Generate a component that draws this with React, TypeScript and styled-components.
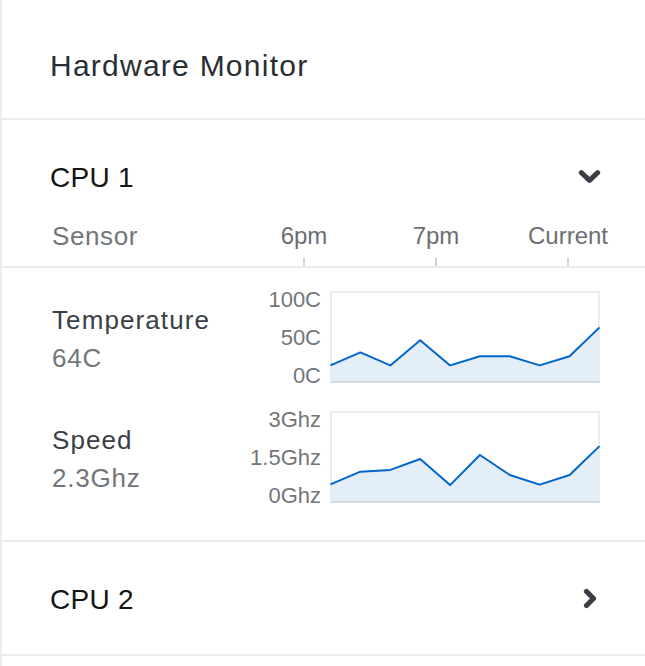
import React from "react";
import styled, { createGlobalStyle } from "styled-components";

const GlobalStyle = createGlobalStyle`
  html, body { margin: 0; padding: 0; background: #ffffff; }
  body { font-family: "Liberation Sans", Arial, sans-serif; }
  * { box-sizing: border-box; }
`;

const Panel = styled.div`
  border-left: 2px solid #ececec;
  min-height: 666px;
`;

const PanelHeader = styled.header`
  height: 120px;
  padding: 48px 0 0 48px;
  border-bottom: 2px solid #ececec;
`;

const PanelTitle = styled.h1`
  margin: 0;
  font-size: 30px;
  line-height: 36px;
  font-weight: 400;
  letter-spacing: 1.25px;
  color: #292e34;
`;

const Item = styled.section`
  border-bottom: 2px solid #ececec;
`;

const Toggle = styled.div<{ $bottom: number }>`
  display: flex;
  align-items: center;
  justify-content: space-between;
  padding: 41px 44px ${(p) => p.$bottom}px 48px;
`;

const ItemTitle = styled.h2`
  margin: 0;
  font-size: 28px;
  line-height: 34px;
  font-weight: 400;
  letter-spacing: 0.3px;
  color: #151515;
`;

const IconBox = styled.span`
  display: flex;
  width: 23px;
  justify-content: center;
  align-items: center;
  margin-bottom: 3px;
`;

const AxisHeader = styled.div`
  display: grid;
  grid-template-columns: 186px repeat(3, 132px);
  padding: 26px 0 0 50px;
`;

const SensorHead = styled.div`
  font-size: 26px;
  line-height: 30px;
  letter-spacing: 0.6px;
  color: #72767b;
`;

const TimeCell = styled.div`
  display: flex;
  flex-direction: column;
  align-items: center;
`;

const TimeLabel = styled.span`
  font-size: 24px;
  line-height: 30px;
  color: #6a6e73;
`;

const Tick = styled.span`
  width: 2px;
  height: 8px;
  margin-top: 7px;
  background: #d2d2d2;
`;

const Rows = styled.div`
  display: flex;
  flex-direction: column;
  gap: 28px;
  padding: 23px 45px 37px 50px;
`;

const SensorRow = styled.div`
  display: grid;
  grid-template-columns: 1fr auto 270px;
  column-gap: 9px;
  align-items: start;
`;

const SensorInfo = styled.div`
  padding-top: 10px;
  font-size: 26px;
  line-height: 38px;
`;

const SensorName = styled.div`
  letter-spacing: 1.1px;
  color: #393f44;
`;

const SensorValue = styled.div`
  letter-spacing: 0.8px;
  color: #72767b;
`;

const Axis = styled.div`
  display: flex;
  flex-direction: column;
  align-items: flex-end;
  gap: 20px;
  margin-bottom: -2px;
  font-size: 22px;
  line-height: 18px;
  color: #72767b;
`;

const ChartBox = styled.div`
  width: 270px;
  height: 92px;
`;

const ChevronDown = () => (
  <svg width="24" height="15" viewBox="0 0 24 15">
    <polyline
      points="3.5,3.5 12,11.5 20.5,3.5"
      fill="none"
      stroke="#393f44"
      strokeWidth="5.2"
      strokeLinecap="round"
      strokeLinejoin="round"
    />
  </svg>
);

const ChevronRight = () => (
  <svg width="14" height="21" viewBox="0 0 14 21">
    <polyline
      points="3.5,3.5 10.5,10.5 3.5,17.5"
      fill="none"
      stroke="#393f44"
      strokeWidth="5.2"
      strokeLinecap="round"
      strokeLinejoin="round"
    />
  </svg>
);

type Sensor = {
  name: string;
  value: string;
  ticks: string[];
  max: number;
  data: number[];
};

const sensors: Sensor[] = [
  {
    name: "Temperature",
    value: "64C",
    ticks: ["100C", "50C", "0C"],
    max: 100,
    data: [14, 31, 14, 47, 14, 26, 26, 14, 26, 64],
  },
  {
    name: "Speed",
    value: "2.3Ghz",
    ticks: ["3Ghz", "1.5Ghz", "0Ghz"],
    max: 3,
    data: [0.46, 0.96, 1.03, 1.46, 0.43, 1.62, 0.83, 0.45, 0.83, 1.97],
  },
];

const W = 270;
const H = 92;

const Sparkline = ({ data, max }: { data: number[]; max: number }) => {
  const step = (W - 1) / (data.length - 1);
  const pts = data.map((v, i) => [i * step + 0.5, 85 - (v / max) * 76] as const);
  const line = pts.map(([x, y]) => `${x.toFixed(1)},${y.toFixed(1)}`).join(" ");
  const area = `M0.5,${H} L${line.replace(/ /g, " L")} L${W - 0.5},${H} Z`;
  return (
    <svg width={W} height={H} viewBox={`0 0 ${W} ${H}`}>
      <rect x="1" y="1" width={W - 2} height={H - 2} fill="#ffffff" stroke="#ececec" strokeWidth="2" />
      <path d={area} fill="#e4eef9" />
      <polyline points={line} fill="none" stroke="#0066cc" strokeWidth="2" strokeLinejoin="round" />
      <line x1="0" y1={H - 1} x2={W} y2={H - 1} stroke="#d3dbe3" strokeWidth="2" />
    </svg>
  );
};

export default function App() {
  return (
    <>
      <GlobalStyle />
      <Panel>
        <PanelHeader>
          <PanelTitle>Hardware Monitor</PanelTitle>
        </PanelHeader>

        <Item>
          <Toggle $bottom={0}>
            <ItemTitle>CPU 1</ItemTitle>
            <IconBox>
              <ChevronDown />
            </IconBox>
          </Toggle>
          <AxisHeader>
            <SensorHead>Sensor</SensorHead>
            {["6pm", "7pm", "Current"].map((t) => (
              <TimeCell key={t}>
                <TimeLabel>{t}</TimeLabel>
                <Tick />
              </TimeCell>
            ))}
          </AxisHeader>
        </Item>

        <Item>
          <Rows>
            {sensors.map((s) => (
              <SensorRow key={s.name}>
                <SensorInfo>
                  <SensorName>{s.name}</SensorName>
                  <SensorValue>{s.value}</SensorValue>
                </SensorInfo>
                <Axis>
                  {s.ticks.map((t) => (
                    <span key={t}>{t}</span>
                  ))}
                </Axis>
                <ChartBox>
                  <Sparkline data={s.data} max={s.max} />
                </ChartBox>
              </SensorRow>
            ))}
          </Rows>
        </Item>

        <Item>
          <Toggle $bottom={37}>
            <ItemTitle>CPU 2</ItemTitle>
            <IconBox>
              <ChevronRight />
            </IconBox>
          </Toggle>
        </Item>
      </Panel>
    </>
  );
}
